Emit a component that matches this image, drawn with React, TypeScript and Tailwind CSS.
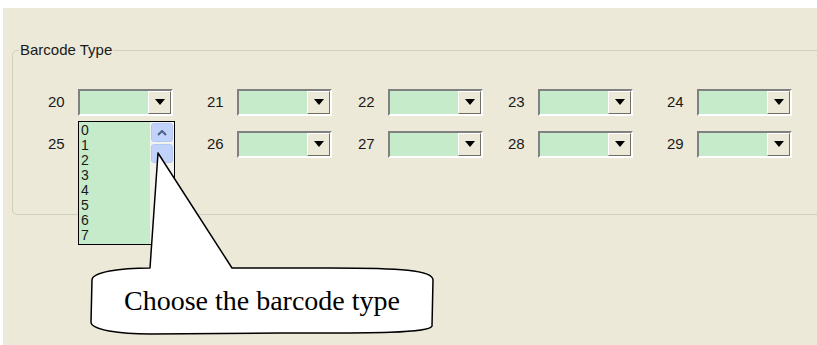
import React from "react";

const row1 = [
  { n: "20", ml: "ml-[35px]" },
  { n: "21", ml: "ml-[34px]" },
  { n: "22", ml: "ml-[26px]" },
  { n: "23", ml: "ml-[25px]" },
  { n: "24", ml: "ml-[34px]" },
];
const row2 = ["25", "26", "27", "28", "29"];

function Combo() {
  return (
    <div className="flex h-[27px] w-[95px] border-2 border-t-[#808080] border-l-[#808080] border-b-white border-r-white bg-[#C6EBCB]">
      <div className="flex-1" />
      <div className="flex w-[23px] items-center justify-center border border-t-white border-l-white border-b-[#716F64] border-r-[#716F64] bg-[#ECE9D8]">
        <span className="block h-0 w-0 border-x-[5px] border-t-[6px] border-x-transparent border-t-black" />
      </div>
    </div>
  );
}

function Cell({ n, ml }: { n: string; ml: string }) {
  return (
    <div className={`flex items-center ${ml}`}>
      <span className="w-[30px] text-[15px] text-[#1a1a1a]">{n}</span>
      <Combo />
    </div>
  );
}

export default function App() {
  return (
    <div className="relative h-[345px] w-[817px] overflow-hidden bg-white pl-[3px] pt-[8px] font-['Liberation_Sans',sans-serif]">
      <div className="h-full bg-[#ECE9D8] pl-[9px] pt-[31px]">
        <fieldset className="h-[176px] w-[830px] rounded-[5px] border border-[#D0D0BF]">
          <legend className="ml-[6px] px-[1px] text-[15px] text-[#1a1a1a]">Barcode Type</legend>
          <div className="mt-[27px] flex flex-col gap-[15px]">
            <div className="flex">
              {row1.map((c) => (
                <Cell key={c.n} n={c.n} ml={c.ml} />
              ))}
            </div>
            <div className="flex">
              {row2.map((n, i) => (
                <Cell key={n} n={n} ml={row1[i].ml} />
              ))}
            </div>
          </div>
        </fieldset>
      </div>

      {/* open dropdown list of combo 20 */}
      <div className="absolute left-[78px] top-[121px] flex h-[124px] w-[97px] border border-black bg-[#C6EBCB]">
        <div className="flex-1 pl-[2px] pt-[1px] text-[14px] leading-[15px] text-[#1a1a1a]">
          {["0", "1", "2", "3", "4", "5", "6", "7"].map((d) => (
            <div key={d}>{d}</div>
          ))}
        </div>
        <div className="flex w-[24px] flex-col gap-[2px] bg-[#F3F3EE] p-[1px]">
          <div className="flex h-[19px] items-center justify-center rounded-[3px] border border-[#B4C8F6] bg-[#C1D3FB]">
            <svg width="10" height="6" viewBox="0 0 10 6">
              <path d="M1 5 L5 1 L9 5" fill="none" stroke="#4D6185" strokeWidth="2" />
            </svg>
          </div>
          <div className="h-[19px] rounded-[3px] border border-[#B4C8F6] bg-[#C1D3FB]" />
        </div>
      </div>

      {/* callout */}
      <svg className="absolute left-0 top-0" width="817" height="345" viewBox="0 0 817 345">
        <path
          d="M158 153 L150 268 C120 268 92 272 92 280 L91 322 C91 330 120 334 150 334 L280 333 C350 333 430 334 432 326 L433 280 C433 270 400 268 330 268 L232 268 Z"
          fill="white"
          stroke="black"
          strokeWidth="1.5"
          strokeLinejoin="round"
        />
      </svg>
      <div className="absolute left-[91px] top-[284px] w-[342px] text-center font-['Liberation_Serif',serif] text-[28px] leading-[34px] text-black">
        Choose the barcode type
      </div>
    </div>
  );
}
